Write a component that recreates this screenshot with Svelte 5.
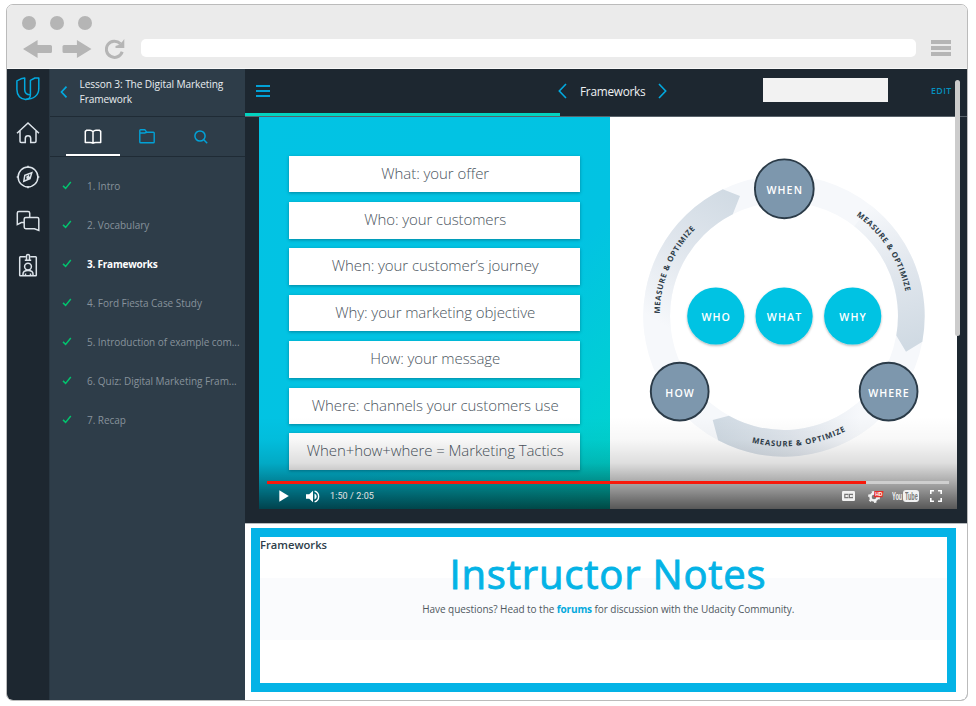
<script>
  const lessons = [
    '1. Intro',
    '2. Vocabulary',
    '3. Frameworks',
    '4. Ford Fiesta Case Study',
    '5. Introduction of example com...',
    '6. Quiz: Digital Marketing Fram...',
    '7. Recap'
  ];
  const active = 2;

  const cards = [
    { text: 'What: your offer', width: 108 },
    { text: 'Who: your customers', width: 142 },
    { text: 'When: your customer’s journey', width: 207 },
    { text: 'Why: your marketing objective', width: 200 },
    { text: 'How: your message', width: 130 },
    { text: 'Where: channels your customers use', width: 247 },
    { text: 'When+how+where = Marketing Tactics', width: 257 }
  ];

  const channels = [
    { label: 'WHEN', x: 784.3, y: 188.8, r: 29.4, w: 34.5 },
    { label: 'HOW', x: 679.7, y: 391.6, r: 28.9, w: 27.5 },
    { label: 'WHERE', x: 888.6, y: 391.6, r: 28.9, w: 39.5 }
  ];
  const core = [
    { label: 'WHO', x: 715.8, w: 27.5 },
    { label: 'WHAT', x: 784.1, w: 33.3 },
    { label: 'WHY', x: 852.7, w: 25.5 }
  ];

  // Point on a circle round the diagram's centre; degrees run clockwise from the top.
  const at = (r, deg) => {
    const a = (deg * Math.PI) / 180;
    return `${(784 + r * Math.sin(a)).toFixed(2)} ${(316 - r * Math.cos(a)).toFixed(2)}`;
  };
  const segment = (from, outer, inner, tip) =>
    `M${at(140.7, from)}A140.7 140.7 0 0 1 ${at(140.7, outer)}L${tip}L${at(114, inner)}A114 114 0 0 0 ${at(114, from)}Z`;
  const segments = [
    { id: 'gl', d: segment(262, 334.2, 333.3, '740 196'), x1: 655, y1: 320, x2: 732, y2: 190 },
    { id: 'gr', d: segment(38, 100.5, 99.9, '906 351.7'), x1: 868, y1: 205, x2: 910, y2: 345 },
    { id: 'gb', d: segment(140, 207.9, 208.9, '712.7 420'), x1: 860, y1: 420, x2: 718, y2: 430 }
  ];
</script>

<div class="window">
  <header class="chrome">
    <div class="dots"><i></i><i></i><i></i></div>
    <div class="tools">
      <svg class="arrows" width="70" height="18" viewBox="0 0 70 18" fill="#b5b5b5">
        <path d="M0 9L14.6 0V5H27.4Q29 5 29 6.5V11.5Q29 13 27.4 13H14.6V18Z" />
        <path d="M68.5 9L53.9 0V5H41.1Q39.5 5 39.5 6.5V11.5Q39.5 13 41.1 13H53.9V18Z" />
      </svg>
      <svg class="reload" width="20" height="20" viewBox="0 0 20 20">
        <path d="M17.2 12.8A8.1 8.1 0 1 1 15.3 4.6" fill="none" stroke="#b5b5b5" stroke-width="3" />
        <path d="M19.3 0V9H10.5V7L13.5 6L17 3Z" fill="#b5b5b5" />
      </svg>
      <div class="address"></div>
      <div class="menu"><i></i><i></i><i></i></div>
    </div>
  </header>

  <div class="body">
    <nav class="rail">
      <svg class="logo" width="24" height="24" viewBox="0 0 24 24" stroke-linejoin="round">
        <path d="M5 1.8L.9 3.8V12.5C.9 18.8 4.6 22.4 9.6 22.4C12.5 22.4 14.4 20.9 14.4 17.8C11 17.8 8.7 16.2 8.7 12.8V1Z" />
        <path d="M9.6 22.4C17.6 22.4 22.8 18.4 22.8 11.5V1L18.9 1L14.4 3.4V17.8" />
      </svg>
      <svg class="home" width="24" height="24" viewBox="0 0 24 24">
        <path d="M1 12.2L12 2L23 12.2M4 10V20.2Q4 21.4 5.2 21.4H9.3V17.5A2.7 2.7 0 0 1 14.7 17.5V21.4H18.8Q20 21.4 20 20.2V10" />
      </svg>
      <svg class="compass" width="24" height="24" viewBox="0 0 24 24">
        <circle cx="12" cy="12" r="9.9" />
        <path d="M12 .7V3M12 21V23.3M.7 12H3M21 12H23.3M15.8 7.8L8.8 10.2L7.8 16.3L14 13.8ZM11 12.1L12.5 11L13 12.7L11.3 13.2Z" />
      </svg>
      <svg class="chat" width="24" height="24" viewBox="0 0 24 24">
        <path d="M8.2 13.6H5.3L1.3 15.6V4Q1.3 2.5 2.8 2.5H12Q13.7 2.5 13.7 4V8.4M9.8 8.5H21.3Q22.8 8.5 22.8 10V21.4L18.5 19.7H9.8Q8.2 19.7 8.2 18V10Q8.2 8.5 9.8 8.5Z" />
      </svg>
      <svg class="badge" width="24" height="24" viewBox="0 0 24 24">
        <path d="M9.6 3.8H4.3Q3.7 3.8 3.7 4.6V22.2Q3.7 22.8 4.4 22.8H19.6Q20.3 22.8 20.3 22.2V4.6Q20.3 3.8 19.6 3.8H14.4M10.5 7V3Q10.5 1.5 12 1.5T13.5 3V7M8.8 7.3H15.2M7 22.4V21C7 18.6 9 17.5 12 17.5S17 18.6 17 21V22.4M9.5 22.3V20.5M14.5 22.3V20.5" />
        <circle cx="12" cy="13.6" r="3.4" />
      </svg>
    </nav>

    <aside class="sidebar">
      <div class="lesson">
        <svg width="8" height="14" viewBox="0 0 8 14"><path d="M6.5 1.7L1.5 7L6.5 12.3" fill="none" stroke="#02a9df" stroke-width="1.7" /></svg>
        <p>Lesson 3: The Digital Marketing<br />Framework</p>
      </div>
      <div class="tabs">
        <div class="tab on">
          <svg width="18" height="16" viewBox="0 0 18 16" fill="none" stroke="#fff" stroke-width="1.5" stroke-linejoin="round">
            <path d="M9 2.7Q7.8 1.2 6 1.2H2.8L1.3 2.4V13.6H6.3Q8.2 13.6 9 14.2Q9.8 13.6 11.7 13.6H16.7V2.4L15.2 1.2H12Q10.2 1.2 9 2.7V14" />
          </svg>
        </div>
        <div class="tab">
          <svg width="16" height="15" viewBox="0 0 16 15" fill="none" stroke="#02a1d6" stroke-width="1.4" stroke-linejoin="round">
            <path d="M.8 4V1.6Q.8 .8 1.6 .8H6L7.8 3.3H14.4Q15.2 3.3 15.2 4.1V13Q15.2 13.8 14.4 13.8H1.6Q.8 13.8 .8 13V4H5.4L7.8 3.3" />
          </svg>
        </div>
        <div class="tab">
          <svg width="14" height="14" viewBox="0 0 14 14" fill="none" stroke="#02a1d6" stroke-width="1.5">
            <circle cx="6" cy="6" r="5.1" /><path d="M9.8 9.8L13.2 13.2" />
          </svg>
        </div>
      </div>
      <ul>
        {#each lessons as lesson, i}
          <li class:current={i === active}>
            <svg width="10" height="9" viewBox="0 0 10 9"><path d="M1 4.9L3.6 7.4L8.8 1" fill="none" stroke="#02c36e" stroke-width="1.5" /></svg>
            <span>{lesson}</span>
          </li>
        {/each}
      </ul>
    </aside>

    <main>
      <div class="topbar">
        <div class="burger"><i></i><i></i><i></i></div>
        <div class="pager">
          <svg width="9" height="16" viewBox="0 0 9 16"><path d="M8 1L1.3 8L8 15" /></svg>
          <span>Frameworks</span>
          <svg width="9" height="16" viewBox="0 0 9 16"><path d="M1 1L7.7 8L1 15" /></svg>
        </div>
        <div class="blank"></div>
        <span class="edit">EDIT</span>
      </div>
      <div class="progress"><i></i></div>

      <div class="stage">
        <div class="video">
          <div class="cards">
            {#each cards as card}
              <div class="card">
                <svg width="291" height="36">
                  <text x="146.2" y="22.5" text-anchor="middle" textLength={card.width}>{card.text}</text>
                </svg>
              </div>
            {/each}
          </div>
          <svg class="diagram" width="347" height="392" viewBox="610 117 347 392">
            <defs>
              {#each segments as s}
                <linearGradient id={s.id} gradientUnits="userSpaceOnUse" x1={s.x1} y1={s.y1} x2={s.x2} y2={s.y2}>
                  <stop offset="0" stop-color="#f6f8fb" />
                  <stop offset=".5" stop-color="#e0e6ed" />
                  <stop offset="1" stop-color="#d0dae3" />
                </linearGradient>
              {/each}
              <filter id="soft" x="-20%" y="-20%" width="140%" height="150%">
                <feDropShadow dx="0" dy="1.2" stdDeviation="1.2" flood-color="#000" flood-opacity=".3" />
              </filter>
              <path id="tl" d="M{at(124.3, 271)}A124.3 124.3 0 0 1 {at(124.3, 330)}" />
              <path id="tr" d="M{at(123.8, 35.7)}A123.8 123.8 0 0 1 {at(123.8, 100)}" />
              <path id="tb" d="M{at(130.4, 194.3)}A130.4 130.4 0 0 0 {at(130.4, 130)}" />
            </defs>
            <circle cx="784" cy="316" r="127.3" fill="none" stroke="#f6f8fb" stroke-width="26.8" />
            {#each segments as s}
              <path d={s.d} fill="url(#{s.id})" />
            {/each}
            <g class="arc">
              <text textLength="94"><textPath href="#tl" textLength="94">MEASURE &amp; OPTIMIZE</textPath></text>
              <text textLength="92.5"><textPath href="#tr" textLength="92.5">MEASURE &amp; OPTIMIZE</textPath></text>
              <text textLength="96.5"><textPath href="#tb" textLength="96.5">MEASURE &amp; OPTIMIZE</textPath></text>
            </g>
            {#each channels as c}
              <circle cx={c.x} cy={c.y} r={c.r} fill="#7d97ad" stroke="#2b3b48" stroke-width="1.9" />
              <text class="node" x={c.x - c.w / 2 - 0.6} y={c.y + 5.5} textLength={c.w + 1}>{c.label}</text>
            {/each}
            {#each core as c}
              <circle cx={c.x} cy="316" r="28.6" fill="#02c3e3" filter="url(#soft)" />
              <text class="node" x={c.x - c.w / 2 - 0.6} y="321.4" textLength={c.w + 1}>{c.label}</text>
            {/each}
          </svg>
          <div class="controls">
            <div class="seek"><i></i></div>
            <div class="buttons">
              <svg class="play" width="10" height="12" viewBox="0 0 10 12"><path d="M.3 .2L9.8 6L.3 11.8Z" fill="#fff" /></svg>
              <svg class="volume" width="14" height="13" viewBox="0 0 14 13">
                <path d="M0 4.3H3.2L7 .7V12.3L3.2 8.7H0ZM8.5 3.5Q10.7 4.6 10.7 6.5T8.5 9.5Z" fill="#fff" />
                <path d="M8.6 1.2A5.5 5.5 0 0 1 8.6 11.8" fill="none" stroke="#fff" stroke-width="1.4" />
              </svg>
              <span class="time">1:50 / 2:05</span>
              <svg class="cc" width="13" height="10" viewBox="0 0 13 10">
                <rect width="13" height="10" rx="1.2" fill="#f2f2f2" />
                <path d="M5.8 4.2V3.4H2.8V6.6H5.8V5.8M10.4 4.2V3.4H7.4V6.6H10.4V5.8" fill="none" stroke="#777" stroke-width="1.2" />
              </svg>
              <svg class="gear" width="16" height="13" viewBox="0 0 16 13">
                <circle cx="6" cy="7" r="3.5" fill="none" stroke="#f2f2f2" stroke-width="2.4" />
                <circle cx="6" cy="7" r="5" fill="none" stroke="#f2f2f2" stroke-width="2" stroke-dasharray="2.4 2.8" />
                <path d="M6.5 1H15.5L14.5 7.2H5.8Z" fill="#e52d27" />
                <text x="7.3" y="6" textLength="7">HD</text>
              </svg>
              <div class="yt">
                <span><svg width="11" height="12" viewBox="0 0 11 12"><text transform="scale(.52 1)" x="0" y="10">You</text></svg></span>
                <span class="tube"><svg width="13" height="12" viewBox="0 0 13 12"><text transform="scale(.5 1)" x="0" y="10">Tube</text></svg></span>
              </div>
              <svg class="full" width="12" height="12" viewBox="0 0 12 12"><path d="M.8 4V.8H4M8 .8H11.2V4M11.2 8V11.2H8M4 11.2H.8V8" fill="none" stroke="#fff" stroke-width="1.6" /></svg>
            </div>
          </div>
        </div>
        <div class="scroll"></div>
      </div>

      <section class="notes">
        <div class="box">
          <h2>Frameworks</h2>
          <div class="band">
            <h1>Instructor Notes</h1>
            <p>Have questions? Head to the <b>forums</b> for discussion with the Udacity Community.</p>
          </div>
        </div>
      </section>
    </main>
  </div>
</div>

<style>
  :global(body) { background: #fff; }
  * { box-sizing: border-box; }
  p, ul, h1, h2 { margin: 0; padding: 0; }
  i { display: block; }
  svg { display: block; flex: none; }
  .window {
    margin: 4px 0 0 6px;
    width: 962px;
    height: 697px;
    border: 1px solid #bbb;
    border-radius: 7px;
    overflow: hidden;
    display: flex;
    flex-direction: column;
    font-family: "Open Sans", "Noto Sans", sans-serif;
  }
  .chrome { height: 64px; flex: none; background: #ebebeb; border-bottom: 1px solid #f8f8f8; padding: 11px 0 0 15px; }
  .dots { display: flex; gap: 14px; }
  .dots i { width: 14px; height: 14px; border-radius: 50%; background: #b5b5b5; }
  .tools { display: flex; align-items: center; height: 20px; margin-top: 9px; padding-left: 1px; }
  .reload { margin-left: 12px; }
  .address { width: 775px; height: 18px; border-radius: 5px; background: #fff; margin: -2px 0 0 16px; }
  .menu { margin: -2px 0 0 15px; display: flex; flex-direction: column; gap: 2px; }
  .menu i { width: 20px; height: 4px; background: #b5b5b5; }

  .body { display: flex; flex: 1; min-height: 0; }
  .rail { width: 42px; flex: none; background: #1d2730; display: flex; flex-direction: column; align-items: center; padding-top: 8px; }
  .rail svg { fill: none; stroke: #dde4ea; stroke-width: 1.5; }
  .rail .logo { stroke: #02a9df; }
  .rail .home, .rail .compass, .rail .chat, .rail .badge { margin-top: 20px; }

  .sidebar { width: 196px; flex: none; background: #2e3d49; border-left: 1px solid #283641; }
  .lesson { height: 48px; border-bottom: 1px solid #1f2b35; display: flex; padding: 8px 0 0 9.5px; }
  .lesson svg { margin-top: 8px; }
  .lesson p { margin-left: 12px; color: #e9edf0; font-size: 10.15px; letter-spacing: -.1px; line-height: 15px; white-space: nowrap; }
  .tabs { height: 40px; border-bottom: 1px solid #1f2b35; display: flex; padding-left: 16px; }
  .tab { width: 54px; height: 39px; display: flex; align-items: center; justify-content: center; }
  .on { border-bottom: 2px solid #fff; padding-top: 2px; }
  ul { list-style: none; padding-top: 9px; }
  li { height: 39px; display: flex; align-items: center; padding-left: 12px; font-size: 10px; letter-spacing: -.04px; color: #87929b; white-space: nowrap; }
  li span { margin-left: 15px; }
  .current { color: #fff; font-weight: 700; letter-spacing: -.22px; }

  main { flex: 1; min-width: 0; background: #1d2730; display: flex; flex-direction: column; }
  .topbar { height: 44px; flex: none; display: flex; align-items: center; padding-left: 11px; }
  .burger { display: flex; flex-direction: column; gap: 3px; width: 14px; }
  .burger i { height: 2px; background: #02a1d6; }
  .pager { display: flex; align-items: center; margin-left: 288px; color: #eef1f3; }
  .pager span { width: 65px; margin: 0 13px; font-size: 11.8px; letter-spacing: -.25px; white-space: nowrap; }
  .pager svg { fill: none; stroke: #02a9df; stroke-width: 1.6; }
  .blank { width: 125px; height: 24px; background: #f2f2f2; margin-left: 96px; margin-top: -2px; }
  .edit { margin-left: 43px; font-size: 8.8px; font-weight: 600; letter-spacing: .4px; color: #0590be; }
  .progress { height: 4px; flex: none; border-bottom: 1px solid #59636b; }
  .progress i { width: 315px; height: 3px; background: #02d3c0; }

  .stage { height: 405.5px; flex: none; position: relative; padding-left: 14px; }
  .video { position: relative; width: 698px; height: 392px; background: #fff; display: flex; overflow: hidden; }
  .cards { width: 351px; flex: none; background: linear-gradient(135deg, #02c3e4 0%, #02c3e2 60%, #00d7cb 100%); padding: 38.6px 0 0 30px; display: flex; flex-direction: column; gap: 9.95px; }
  .card { width: 291px; height: 36.5px; flex: none; background: #fff; box-shadow: 0 1px 3px rgba(0, 40, 60, .4); }
  .card text { font-size: 15px; font-weight: 300; fill: #4b5560; }
  .card:last-child { margin-top: -1px; }
  .arc text { font-size: 7.7px; font-weight: 700; fill: #2e3d49; }
  .node { font-size: 10.6px; font-weight: 600; fill: #fff; }
  .controls { position: absolute; left: 0; right: 0; bottom: 0; height: 92px; padding: 64px 8px 0; background: linear-gradient(rgba(0,0,0,0), rgba(0,0,0,.03) 25%, rgba(0,0,0,.13) 50%, rgba(0,0,0,.35) 72%, rgba(0,0,0,.66)); }
  .seek { height: 3px; background: #cfcfcf; }
  .seek i { width: 599px; height: 3px; background: #f7190b; }
  .buttons { display: flex; align-items: center; height: 24px; padding-left: 12px; }
  .volume { margin-left: 17px; }
  .time { margin-left: 10px; width: 46px; font: 9px Roboto, sans-serif; letter-spacing: .1px; color: #e4e4e4; white-space: nowrap; }
  .cc { margin-left: 466px; }
  .gear { margin-left: 13px; }
  .gear text { font: 700 5px "Liberation Sans", sans-serif; fill: #fff; }
  .yt { margin-left: 8px; width: 27px; display: flex; align-items: center; }
  .yt span { display: block; }
  .yt text { font: 700 11px "Liberation Sans", sans-serif; fill: #f2f2f2; }
  .yt .tube { width: 16px; height: 12px; padding-left: 1.5px; border-radius: 3px; background: #f2f2f2; }
  .yt .tube text { fill: #777; }
  .full { margin-left: 11px; }
  .scroll { position: absolute; left: 710px; top: -37px; width: 5px; height: 256px; border-radius: 3px; background: #ccc; }

  .notes { flex: 1; background: #fff; border-top: 1px solid #b5babd; padding: 4.5px 0 0 6px; }
  .box { width: 705px; height: 164px; border: 9px solid #04b3e6; }
  h2 { font-size: 11.2px; line-height: 15px; font-weight: 600; color: #2e3d49; }
  .band { margin-top: 26px; height: 62px; background: #fafbfd; text-align: center; }
  h1 { margin: 0 0 0 9px; padding: 0; font-size: 40px; line-height: 54px; height: 24px; font-weight: 400; letter-spacing: .8px; -webkit-text-stroke: .9px #04b3e6; color: #04b3e6; transform: translateY(-31px); }
  .band p { font-size: 10px; letter-spacing: -.05px; line-height: 14px; color: #4f5860; padding-left: 9.5px; }
  b { color: #04a9dc; font-weight: 700; letter-spacing: -.15px; }
</style>
